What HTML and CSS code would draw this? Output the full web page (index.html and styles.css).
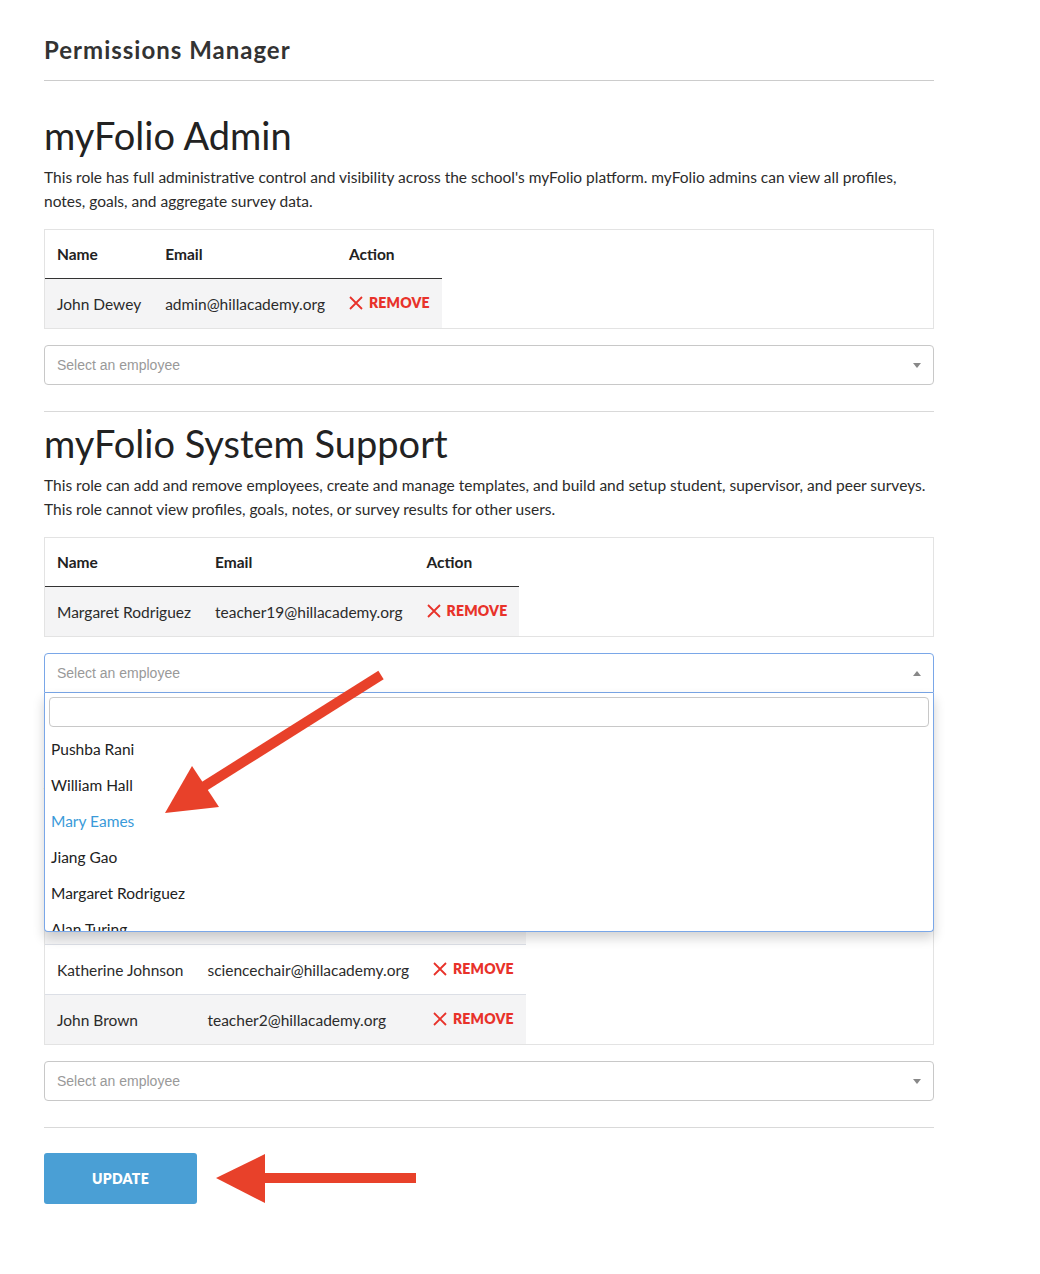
FILE: index.html
```html
<!DOCTYPE html>
<html lang="en">
<head>
    <meta charset="UTF-8">
    <meta name="viewport" content="width=device-width, initial-scale=1.0">
    <title>Permissions Manager</title>
    <link rel="stylesheet" href="styles.css">
</head>
<body>
    <div class="page">
        <h1 class="page-title">Permissions Manager</h1>

        <form id="permissionsForm">
            <section class="role role-first">
                <h2>myFolio Admin</h2>
                <p>This role has full administrative control and visibility across the school's myFolio platform. myFolio admins can view all profiles, notes, goals, and aggregate survey data.</p>
                <div class="table-box">
                    <table>
                        <thead>
                            <tr><th>Name</th><th>Email</th><th>Action</th></tr>
                        </thead>
                        <tbody>
                            <tr>
                                <td>John Dewey</td>
                                <td>admin@hillacademy.org</td>
                                <td><a class="remove" href="#"><svg viewBox="0 0 14 14" width="14" height="14"><path d="M1 1 L13 13 M13 1 L1 13" /></svg>Remove</a></td>
                            </tr>
                        </tbody>
                    </table>
                </div>
                <div class="select">
                    <span class="placeholder">Select an employee</span>
                    <span class="caret"></span>
                </div>
            </section>

            <section class="role">
                <h2>myFolio System Support</h2>
                <p>This role can add and remove employees, create and manage templates, and build and setup student, supervisor, and peer surveys. This role cannot view profiles, goals, notes, or survey results for other users.</p>
                <div class="table-box">
                    <table>
                        <thead>
                            <tr><th>Name</th><th>Email</th><th>Action</th></tr>
                        </thead>
                        <tbody>
                            <tr>
                                <td>Margaret Rodriguez</td>
                                <td>teacher19@hillacademy.org</td>
                                <td><a class="remove" href="#"><svg viewBox="0 0 14 14" width="14" height="14"><path d="M1 1 L13 13 M13 1 L1 13" /></svg>Remove</a></td>
                            </tr>
                        </tbody>
                    </table>
                </div>
                <div class="select open">
                    <span class="placeholder">Select an employee</span>
                    <span class="caret"></span>
                    <div class="dropdown">
                        <div class="search"><input type="text"></div>
                        <ul class="results">
                            <li>Pushba Rani</li>
                            <li>William Hall</li>
                            <li class="highlighted">Mary Eames</li>
                            <li>Jiang Gao</li>
                            <li>Margaret Rodriguez</li>
                            <li>Alan Turing</li>
                            <li>Katherine Johnson</li>
                        </ul>
                    </div>
                </div>
            </section>

            <section class="role">
                <h2>myFolio Survey Manager</h2>
                <p>This role can view aggregate survey results, build and send student, supervisor, and peer surveys, and send survey reminders to all employees. This role cannot view profiles, goals, or notes for other users.</p>
                <div class="table-box">
                    <table>
                        <thead>
                            <tr><th>Name</th><th>Email</th><th>Action</th></tr>
                        </thead>
                        <tbody>
                            <tr>
                                <td>Alan Turing</td>
                                <td>mathchair@hillacademy.org</td>
                                <td><a class="remove" href="#"><svg viewBox="0 0 14 14" width="14" height="14"><path d="M1 1 L13 13 M13 1 L1 13" /></svg>Remove</a></td>
                            </tr>
                            <tr>
                                <td>Katherine Johnson</td>
                                <td>sciencechair@hillacademy.org</td>
                                <td><a class="remove" href="#"><svg viewBox="0 0 14 14" width="14" height="14"><path d="M1 1 L13 13 M13 1 L1 13" /></svg>Remove</a></td>
                            </tr>
                            <tr>
                                <td>John Brown</td>
                                <td>teacher2@hillacademy.org</td>
                                <td><a class="remove" href="#"><svg viewBox="0 0 14 14" width="14" height="14"><path d="M1 1 L13 13 M13 1 L1 13" /></svg>Remove</a></td>
                            </tr>
                        </tbody>
                    </table>
                </div>
                <div class="select">
                    <span class="placeholder">Select an employee</span>
                    <span class="caret"></span>
                </div>
            </section>

            <div class="actions">
                <button type="submit" class="btn-update">Update</button>
            </div>
        </form>
    </div>

    <!-- annotation arrows -->
    <svg class="annotations" width="1040" height="1274" viewBox="0 0 1040 1274">
        <line x1="381" y1="675" x2="200" y2="789" stroke="#e8412a" stroke-width="10" />
        <polygon points="165,813 192,766 219,807" fill="#e8412a" />
        <rect x="258" y="1173" width="158" height="10" fill="#e8412a" />
        <polygon points="216,1178 265,1154 265,1203" fill="#e8412a" />
    </svg>
</body>
</html>
```

FILE: styles.css
```css
body {
    font-family: Lato, "Open Sans", sans-serif;
    color: #2b2b2b;
    background-color: #fff;
    margin: 0;
    padding: 0;
}

.page {
    width: 890px;
    margin-left: 44px;
    padding-top: 35px;
}

.page-title {
    font-size: 24px;
    line-height: 30px;
    font-weight: 700;
    letter-spacing: 1px;
    color: #333;
    margin: 0;
    padding-bottom: 15px;
    border-bottom: 1px solid #ccc;
}

form {
    margin: 0;
}

.role {
    padding-top: 8px;
    padding-bottom: 26px;
    border-bottom: 1px solid #d9d9d9;
}

.role-first {
    padding-top: 31px;
}

.role h2 {
    font-size: 38px;
    line-height: 46px;
    font-weight: 400;
    color: #222;
    margin: 0 0 7px 0;
}

.role p {
    font-size: 15.5px;
    line-height: 24px;
    margin: 0 0 16px 0;
}

.table-box {
    border: 1px solid #e3e3e3;
    margin-bottom: 16px;
}

table {
    border-collapse: collapse;
    font-size: 15.5px;
}

th,
td {
    text-align: left;
    padding: 12px;
    line-height: 24px;
    white-space: nowrap;
}

th {
    font-weight: 700;
    color: #222;
    border-bottom: 1px solid #333;
}

tbody tr:nth-child(odd) {
    background-color: #f4f4f5;
}

tbody tr + tr td {
    border-top: 1px solid #dcdfe6;
}

.remove {
    display: inline-flex;
    align-items: center;
    gap: 6px;
    color: #e8322a;
    text-decoration: none;
    text-transform: uppercase;
    font-weight: 800;
    font-size: 14px;
    letter-spacing: 0.2px;
}

.remove svg {
    stroke: #e8322a;
    stroke-width: 1.8;
    fill: none;
}

.select {
    position: relative;
    height: 38px;
    border: 1px solid #c8c8c8;
    border-radius: 4px;
    display: flex;
    align-items: center;
    padding: 0 12px;
    font-family: "Liberation Sans", Arial, sans-serif;
    font-size: 14px;
}

.select .placeholder {
    color: #999;
    flex: 1;
}

.caret {
    width: 0;
    height: 0;
    border-left: 4px solid transparent;
    border-right: 4px solid transparent;
    border-top: 5px solid #888;
}

.select.open {
    border-color: #7aa7e8;
    border-radius: 4px 4px 0 0;
}

.select.open .caret {
    border-top: none;
    border-bottom: 5px solid #888;
}

.dropdown {
    position: absolute;
    top: 39px;
    left: -1px;
    right: -1px;
    background: #fff;
    border: 1px solid #7aa7e8;
    border-top: none;
    border-radius: 0 0 4px 4px;
    box-shadow: 0 6px 12px rgba(0, 0, 0, 0.18);
    z-index: 10;
}

.search {
    padding: 4px;
}

.search input {
    width: 100%;
    height: 30px;
    box-sizing: border-box;
    border: 1px solid #c8c8c8;
    border-radius: 4px;
    margin: 0;
    display: block;
}

.results {
    list-style: none;
    margin: 0;
    padding: 0;
    max-height: 200px;
    overflow: hidden;
    font-family: Lato, "Open Sans", sans-serif;
    font-size: 15.5px;
}

.results li {
    padding: 6px;
    line-height: 24px;
    color: #222;
}

.results li.highlighted {
    color: #3a9ad9;
}

.actions {
    padding-top: 25px;
}

.btn-update {
    width: 153px;
    height: 51px;
    background-color: #4a9fd5;
    color: #fff;
    border: none;
    border-radius: 3px;
    font-family: Lato, sans-serif;
    font-weight: 800;
    font-size: 14px;
    text-transform: uppercase;
    letter-spacing: 0.3px;
    cursor: pointer;
}

.annotations {
    position: absolute;
    top: 0;
    left: 0;
    pointer-events: none;
    z-index: 20;
}
```
